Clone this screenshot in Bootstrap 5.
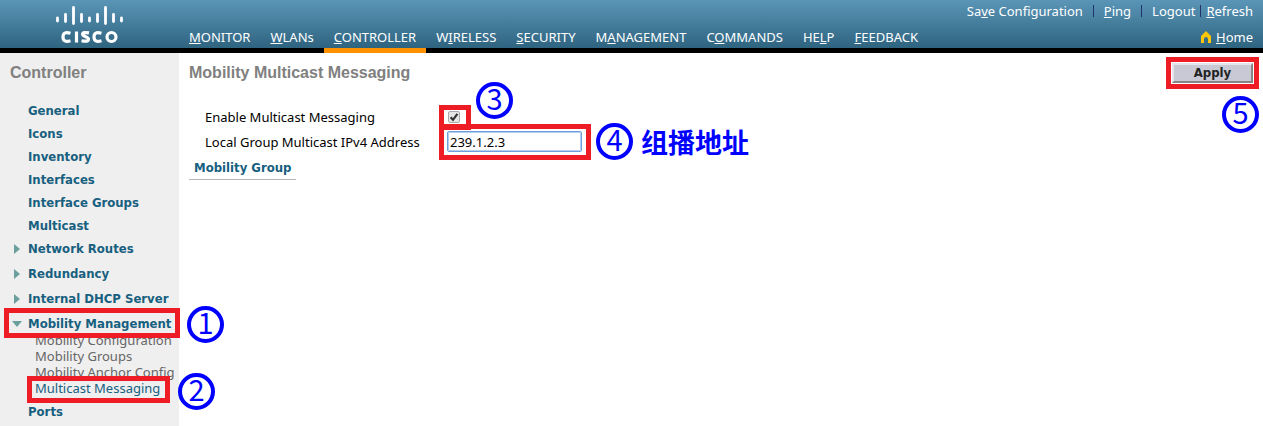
<!DOCTYPE html>
<html lang="en">
<head>
<meta charset="utf-8">
<meta name="viewport" content="width=device-width, initial-scale=1">
<title>Mobility Multicast Messaging</title>
<link href="https://cdn.jsdelivr.net/npm/bootstrap@5.3.0/dist/css/bootstrap.min.css" rel="stylesheet">
<style>
  body { font: 13px/16px "Noto Sans", sans-serif; color: #000; background: #fff; }
  a { color: inherit; text-decoration: none; }
  .topbar { height: 53px; color: #fff; border-bottom: 5px solid #000; background: linear-gradient(#5a95b7, #2f6480) padding-box; }
  .brand { width: 179px; padding: 6px 0 0 55px; }
  .main-nav a { height: 24px; padding: 5px 10px 0; white-space: nowrap; }
  .main-nav a.active { height: 29px; margin-bottom: -5px; border-bottom: 5px solid #ff9100; }
  .tools { padding: 3px 10px 3px 0; }
  .tools .sep { width: 1px; height: 12px; margin: 0 10px; background: #22326c; }
  .tools .sep.tight { margin: 0 5px; }
  .side { width: 179px; background: #efefef; min-height: calc(100vh - 53px); padding-top: 10px; }
  .page-title { font: bold 16px/20px "Liberation Sans", sans-serif; color: #808080; margin: 0; }
  .side .page-title { padding-left: 10px; margin-bottom: 16px; }
  .menu, .menu ul { list-style: none; margin: 0; padding: 0; }
  .menu > li > a, .tab-link, .apply-btn { font: bold 13px/23px "DejaVu Sans Condensed", "DejaVu Sans", sans-serif; }
  .menu > li > a { display: flex; align-items: center; height: 23px; padding-left: 12px; color: #17607f; white-space: nowrap; }
  .menu > li.tall > a { height: 25px; padding-top: 2px; }
  .menu .arrow { width: 16px; height: 10px; flex: none; }
  .menu ul { padding-left: 35px; padding-bottom: 4px; color: #666; margin-top: -3px; }
  .menu ul a { display: block; line-height: 16px; white-space: nowrap; }
  .menu ul a.current { color: #17607f; }
  .marked { position: relative; }
  .frame { position: absolute; border: 5px solid #ee1c24; pointer-events: none; z-index: 1; }
  .step { position: absolute; z-index: 2; display: flex; align-items: center; justify-content: center; width: 37px; height: 37px; padding-bottom: 7px; border: 4px solid #00f; border-radius: 50%; color: #00f; font: 400 29px/30px "Noto Sans CJK SC", sans-serif; }
  .note { position: absolute; color: #00f; font: bold 27px/36px "Noto Sans CJK SC", sans-serif; white-space: nowrap; }
  .content { padding: 10px 10px 0; }
  .settings { margin-top: 21px; }
  .setting { height: 25px; padding-left: 16px; }
  .setting label { width: 242px; }
  .setting input[type=text] { width: 135px; height: 21px; padding: 0 2px; border: 1px solid #6f9fdc; outline: 1px solid #b4cdee; outline-offset: -2px; border-radius: 2px; color: #000; }
  .check { appearance: none; width: 12px; height: 12px; margin: 0 0 0 1px; border: 1px solid #aaa; border-radius: 2px;
    background: #e6e6e6; }
  .check:checked { background: #e6e6e6 url("data:image/svg+xml,%3Csvg xmlns='http://www.w3.org/2000/svg' viewBox='0 0 10 10'%3E%3Cpath d='M1.6 5.2 4 7.8 8.4 1.8' fill='none' stroke='%23333' stroke-width='2.2'/%3E%3C/svg%3E"); }
  .tab-link { display: inline-block; margin-top: 2px; padding: 0 5px; color: #17607f; border-bottom: 1px solid #b5b5b5; }
  .apply-btn { width: 81px; height: 20px; padding: 0; line-height: 16px; color: #222; background: #c8c9d4; border: 2px solid; border-color: #e4e4ea #868686 #868686 #e4e4ea; border-radius: 0; }
  .f-menu { inset: -2px -1px -3px 4px; }
  .s-menu { left: 187px; top: -4px; }
  .f-sub { inset: -4px 9px -7px -8px; }
  .s-sub { left: 143px; top: -7px; }
  .f-check { left: -8px; top: -6px; width: 32px; height: 25px; }
  .s-check { left: 29px; top: -29px; }
  .f-text { inset: -7px -9px -8px -8px; }
  .s-text { left: 149px; top: -8px; }
  .n-text { left: 194px; top: -7px; }
  .f-apply { inset: -6px; }
  .s-apply { right: -6px; top: 33px; }
</style>
</head>
<body>
<header class="topbar d-flex">
  <a class="brand flex-shrink-0" href="#" aria-label="Cisco home">
    <svg width="70" height="40" viewBox="0 0 70 40" fill="none" stroke="#fff">
      <path d="M2.5 12v3M10.5 8.500v7M18.500 1.500v16M26.500 8.500v7M34.500 12v3M42.500 8.500v7M50.500 1.500v16M58.500 8.500v7M66.500 12v3" stroke-width="2.800" stroke-linecap="round"/>
      <g stroke-width="3.200">
        <path d="M15.500 27.300Q8 25 8 31T15.500 34.700M21.500 25.500V36.500M34 26.900Q27.500 25.700 27.600 28.400C27.700 30.600 33.500 30.300 33.500 33.200Q33.400 36.200 26.500 34.700M46.500 27.300Q39 25 39 31T46.500 34.700"/>
        <circle cx="56.500" cy="31" r="4.500"/>
      </g>
    </svg>
  </a>
  <nav class="main-nav d-flex align-items-end flex-grow-1">
    <a href="#"><u>M</u>ONITOR</a>
    <a href="#"><u>W</u>LANs</a>
    <a href="#" class="active"><u>C</u>ONTROLLER</a>
    <a href="#">W<u>I</u>RELESS</a>
    <a href="#"><u>S</u>ECURITY</a>
    <a href="#">M<u>A</u>NAGEMENT</a>
    <a href="#">C<u>O</u>MMANDS</a>
    <a href="#">HE<u>L</u>P</a>
    <a href="#"><u>F</u>EEDBACK</a>
  </nav>
  <div class="tools d-flex flex-column justify-content-between align-items-end flex-shrink-0">
    <div class="d-flex align-items-center">
      <a href="#">Sa<u>v</u>e Configuration</a><span class="sep"></span>
      <a href="#"><u>P</u>ing</a><span class="sep"></span>
      <a href="#">Lo<u>g</u>out</a><span class="sep tight"></span>
      <a href="#"><u>R</u>efresh</a>
    </div>
    <a href="#" class="d-flex align-items-center gap-1">
      <svg width="12" height="12" viewBox="0 0 12 12"><path d="M6 0 11 5V12H8V8Q8 6 6 6T4 8V12H1V5Z" fill="#ffc60a"/></svg>
      <span><u>H</u>ome</span>
    </a>
  </div>
</header>
<div class="d-flex">
  <aside class="side flex-shrink-0">
    <h2 class="page-title">Controller</h2>
    <ul class="menu">
      <li><a href="#"><span class="arrow"></span>General</a></li>
      <li><a href="#"><span class="arrow"></span>Icons</a></li>
      <li><a href="#"><span class="arrow"></span>Inventory</a></li>
      <li><a href="#"><span class="arrow"></span>Interfaces</a></li>
      <li><a href="#"><span class="arrow"></span>Interface Groups</a></li>
      <li><a href="#"><span class="arrow"></span>Multicast</a></li>
      <li><a href="#"><svg class="arrow" viewBox="0 0 16 10"><path d="M2 0 8 5 2 10Z" fill="#6a9f9d"/></svg>Network Routes</a></li>
      <li class="tall"><a href="#"><svg class="arrow" viewBox="0 0 16 10"><path d="M2 0 8 5 2 10Z" fill="#6a9f9d"/></svg>Redundancy</a></li>
      <li class="tall"><a href="#"><svg class="arrow" viewBox="0 0 16 10"><path d="M2 0 8 5 2 10Z" fill="#6a9f9d"/></svg>Internal DHCP Server</a></li>
      <li class="tall"><a href="#" class="marked"><svg class="arrow" viewBox="0 0 16 10"><path d="M0 2H10L5 8Z" fill="#6a9f9d"/></svg>Mobility Management<span class="frame f-menu"></span><span class="step s-menu">1</span></a>
        <ul>
          <li><a href="#">Mobility Configuration</a></li>
          <li><a href="#">Mobility Groups</a></li>
          <li><a href="#">Mobility Anchor Config</a></li>
          <li><a href="#" class="current marked">Multicast Messaging<span class="frame f-sub"></span><span class="step s-sub">2</span></a></li>
        </ul>
      </li>
      <li><a href="#"><span class="arrow"></span>Ports</a></li>
    </ul>
  </aside>
  <main class="content flex-grow-1">
    <div class="d-flex justify-content-between align-items-start">
      <h1 class="page-title">Mobility Multicast Messaging</h1>
      <div class="marked"><button type="button" class="apply-btn d-block">Apply</button><span class="frame f-apply"></span><span class="step s-apply">5</span></div>
    </div>
    <form class="settings">
      <div class="setting d-flex align-items-center">
        <label for="enable">Enable Multicast Messaging</label>
        <div class="marked d-flex"><input class="check" type="checkbox" id="enable" checked><span class="frame f-check"></span><span class="step s-check">3</span></div>
      </div>
      <div class="setting d-flex align-items-center">
        <label for="address">Local Group Multicast IPv4 Address</label>
        <div class="marked d-flex"><input type="text" id="address" value="239.1.2.3"><span class="frame f-text"></span><span class="step s-text">4</span><span class="note n-text" lang="zh">组播地址</span></div>
      </div>
      <a href="#" class="tab-link">Mobility Group</a>
    </form>
  </main>
</div>
<script src="https://cdn.jsdelivr.net/npm/bootstrap@5.3.0/dist/js/bootstrap.bundle.min.js"></script>
</body>
</html>
